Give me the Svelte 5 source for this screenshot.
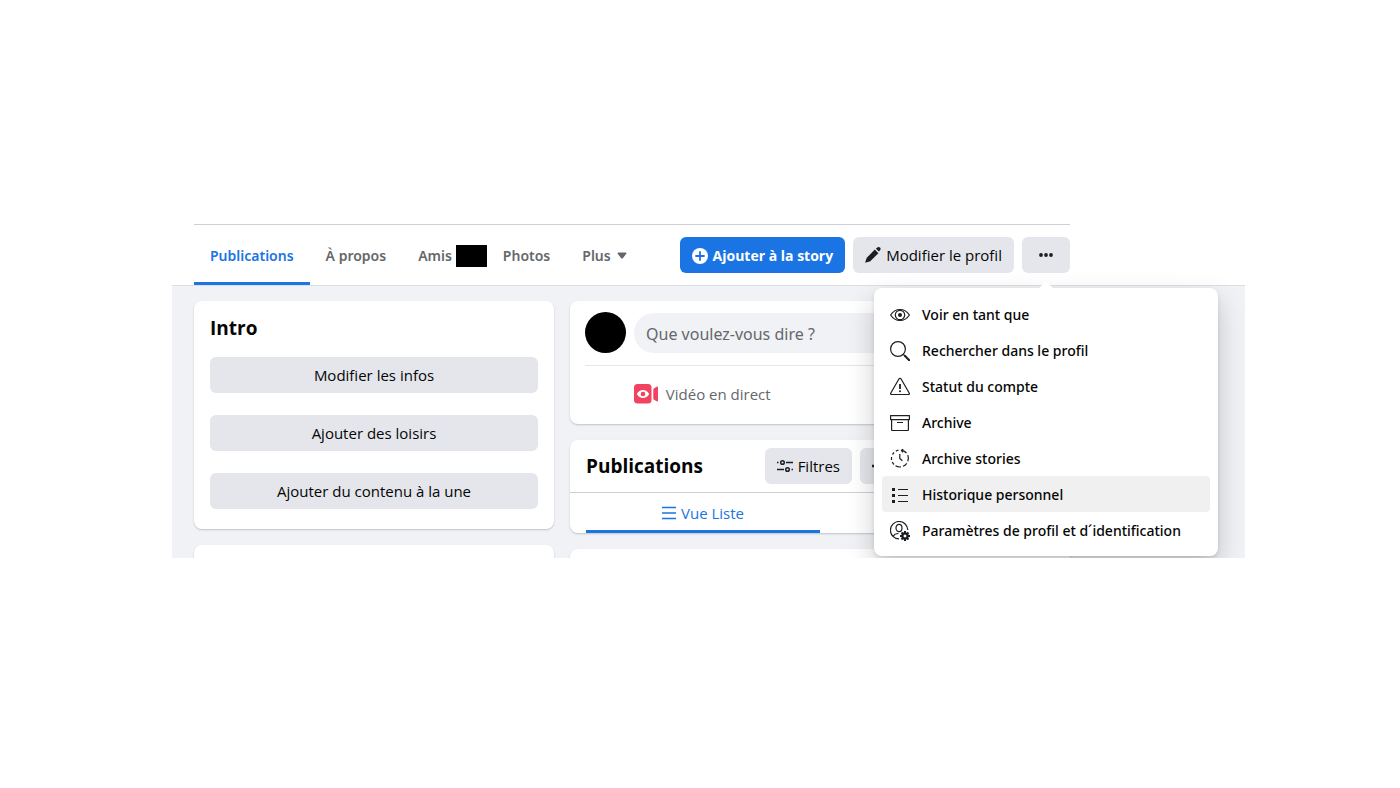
<script>
    let tab = 'Publications';
    let post = '';

    const menu = [
        { icon: 'eye', label: 'Voir en tant que' },
        { icon: 'search', label: 'Rechercher dans le profil' },
        { icon: 'warning', label: 'Statut du compte' },
        { icon: 'archive', label: 'Archive' },
        { icon: 'stories', label: 'Archive stories' },
        { icon: 'list', label: 'Historique personnel', active: true },
        { icon: 'settings', label: 'Paramètres de profil et d´identification' }
    ];

    const introActions = ['Modifier les infos', 'Ajouter des loisirs', 'Ajouter du contenu à la une'];
</script>

<main class="profile">
    <header class="topbar">
        <div class="topbar-inner">
            <nav class="tabs">
                <button class="tab" class:selected={tab === 'Publications'} on:click={() => (tab = 'Publications')}>Publications</button>
                <button class="tab" class:selected={tab === 'À propos'} on:click={() => (tab = 'À propos')}>À propos</button>
                <button class="tab friends" class:selected={tab === 'Amis'} on:click={() => (tab = 'Amis')}>Amis<span class="count"></span></button>
                <button class="tab" class:selected={tab === 'Photos'} on:click={() => (tab = 'Photos')}>Photos</button>
                <button class="tab more">
                    Plus
                    <svg width="10" height="8" viewBox="0 0 10 8"><path d="M1.4.5h7.2c.8 0 1.1.7.7 1.300L6 5.900c-.5.7-1.500.7-2 0L.7 1.800C.3 1.200.6.5 1.400.5Z" fill="#65676b" /></svg>
                </button>
            </nav>

            <div class="actions">
                <button class="btn primary">
                    <svg width="16" height="16" viewBox="0 0 16 16">
                        <circle cx="8" cy="8" r="8" fill="#fff" />
                        <path d="M8 4v8M4 8h8" stroke="#1b74e4" stroke-width="1.8" stroke-linecap="round" />
                    </svg>
                    Ajouter à la story
                </button>
                <button class="btn">
                    <svg width="16" height="16" viewBox="0 0 16 16" fill="#1c1e21">
                        <path d="M9.800 2.600 13.400 6.200 5.500 13.900c-.3.300-.6.500-1 .6L1 15.600c-.5.200-.9-.2-.7-.7l1.200-3.400c.1-.3.300-.7.500-.9Z" />
                        <path d="M10.900 1.700 12 .7c.9-.9 2.200-.8 3-.1s.8 2-.1 2.900l-1 1.100Z" />
                    </svg>
                    Modifier le profil
                </button>

                <div class="options">
                    <button class="btn dots" aria-label="Options du profil" aria-expanded="true">
                        <svg width="16" height="16" viewBox="0 0 16 16" fill="#1c1e21">
                            <circle cx="3" cy="8" r="1.900" /><circle cx="8" cy="8" r="1.900" /><circle cx="13" cy="8" r="1.900" />
                        </svg>
                    </button>

                    <div class="menu" role="menu">
                        <svg class="arrow" width="18" height="8" viewBox="0 0 18 8"><path d="M0 8C4 7 6 1 9 1s5 6 9 7Z" fill="#fff" /></svg>
                        {#each menu as item}
                            <button class="menu-item" class:active={item.active} role="menuitem">
                                <svg width="20" height="20" viewBox="0 0 20 20" fill="none" stroke="#1c1e21" stroke-width="1.2" stroke-linejoin="round">
                                    {#if item.icon === 'eye'}
                                        <path d="M.6 10C3 6.300 6.300 4.500 10 4.500s7 1.800 9.400 5.500C17 13.700 13.700 15.500 10 15.500S3 13.700.6 10Z" />
                                        <circle cx="10" cy="10" r="4.700" />
                                        <circle cx="10" cy="10" r="2" fill="#1c1e21" stroke="none" />
                                    {:else if item.icon === 'search'}
                                        <circle cx="8" cy="8" r="7.400" />
                                        <path d="m13.300 13.300 1.800 1.800" />
                                        <path d="m14.800 14.800 4.400 4.400" stroke-width="2" stroke-linecap="round" />
                                    {:else if item.icon === 'warning'}
                                        <path d="M8.900 2c.5-.9 1.700-.9 2.200 0l8.100 14c.5.9 0 1.500-.9 1.500H1.700c-.9 0-1.400-.6-.9-1.500Z" />
                                        <path d="M10 7v5" stroke-width="1.800" />
                                        <circle cx="10" cy="14.300" r="1" fill="#1c1e21" stroke="none" />
                                    {:else if item.icon === 'archive'}
                                        <path d="M.6 2.600h18.800v4H.6ZM1.600 6.600h16.800V17c0 .3-.2.5-.5.5H2.100c-.3 0-.5-.2-.5-.5ZM7 9.500h6" />
                                    {:else if item.icon === 'stories'}
                                        <path d="M12 1.300A8.500 8.500 0 0 1 16.500 4M17.800 6A8.500 8.500 0 0 1 17.800 12.300M16.700 14.300A8.500 8.500 0 0 1 13 17.300M11 17.900A8.500 8.500 0 0 1 5.500 16.800M4 15.500A8.500 8.500 0 0 1 2.300 13M1.600 11A8.500 8.500 0 0 1 1.600 8M2.500 5.500A8.500 8.500 0 0 1 4 3.500M5.800 2.200A8.500 8.500 0 0 1 8.500 1.200" />
                                        <path d="M13.300 0 11.500 1.300l1.400 2" />
                                        <path d="M9.800 5v4.500l2.600 2.200" />
                                    {:else if item.icon === 'list'}
                                        <path d="M8 4.500h10M8 10.500h10M8 16.500h10" />
                                        <path d="M2 3h3v3H2ZM2 9h3v3H2ZM2 15h3v3H2Z" fill="#1c1e21" stroke="none" />
                                    {:else}
                                        <path d="M9 17.900A8.700 8.700 0 1 1 17.800 9M3.200 15.300c1-1.900 3-2.800 5.300-2.800" />
                                        <ellipse cx="9" cy="7" rx="3" ry="3.600" />
                                        <circle cx="15" cy="15" r="2.600" stroke-width="2.200" />
                                        <path d="M15 10v2M15 18v2M10 15h2M18 15h2M11.500 11.500l1.400 1.400M17.100 17.100l1.400 1.400M11.500 18.500l1.400-1.400M17.100 12.900l1.400-1.400" stroke-width="2" />
                                    {/if}
                                </svg>
                                {item.label}
                            </button>
                        {/each}
                    </div>
                </div>
            </div>
        </div>
    </header>

    <div class="content">
        <div class="column">
            <section class="card intro">
                <h2>Intro</h2>
                {#each introActions as action}
                    <button class="btn">{action}</button>
                {/each}
            </section>
            <section class="card next left"></section>
        </div>

        <div class="column">
            <section class="card composer">
                <div class="composer-row">
                    <div class="avatar"></div>
                    <input type="text" aria-label="Que voulez-vous dire ?" placeholder="Que voulez-vous dire ?" bind:value={post} />
                </div>
                <div class="halves">
                    <button class="live">
                        <svg width="24" height="20" viewBox="0 0 24 20">
                            <rect y="0" width="17.500" height="19.500" rx="3.500" fill="#f3425f" />
                            <path d="M24 3.500v13c0 .8-.6 1.100-1.300.8l-2.200-1.200c-.7-.4-1.200-1-1.200-1.900V6c0-.9.5-1.500 1.200-1.900l2.200-1.300c.7-.4 1.300-.1 1.300.7Z" fill="#f3425f" />
                            <path d="M2.800 10C4.300 7.300 6.500 6 9 6s4.700 1.300 6.200 4c-1.500 2.700-3.700 4-6.200 4s-4.700-1.300-6.200-4Z" fill="#fff" />
                            <circle cx="9" cy="10" r="2.300" fill="#f3425f" />
                        </svg>
                        Vidéo en direct
                    </button>
                </div>
            </section>

            <section class="card posts">
                <div class="posts-head">
                    <h2>Publications</h2>
                    <button class="btn filters">
                        <svg width="16" height="16" viewBox="0 0 16 16" fill="none" stroke="#1c1e21" stroke-width="1.500">
                            <circle cx="5.500" cy="4.500" r="1.800" /><circle cx="10.500" cy="11.500" r="1.800" />
                            <path d="M0 4.500h1.500M9 4.500h7M0 11.500h7M14.500 11.500H16" />
                        </svg>
                        Filtres
                    </button>
                    <button class="btn manage" aria-label="Gérer les publications">
                        <svg width="16" height="16" viewBox="0 0 16 16" fill="none" stroke="#1c1e21">
                            <circle cx="8" cy="8" r="4" stroke-width="2.500" />
                            <path d="M8 0v3M8 13v3M0 8h3M13 8h3M2.800 2.800l2 2M11.200 11.200l2 2M2.800 13.200l2-2M11.200 4.800l2-2" stroke-width="2.500" />
                        </svg>
                    </button>
                </div>
                <div class="halves">
                    <button class="view">
                        <svg width="14" height="14" viewBox="0 0 14 14"><path d="M0 1.500h14M0 7h14M0 12.500h14" stroke="#1b74e4" stroke-width="1.500" /></svg>
                        Vue Liste
                    </button>
                </div>
            </section>
            <section class="card next"></section>
        </div>
    </div>
</main>

<style>
    :global(body) {
        margin: 0;
        background: #fff;
        color: #050505;
        font-family: "Open Sans", "Noto Sans", sans-serif;
        font-size: 15px;
    }

    .profile {
        margin: 224px 155px 0 172px;
        overflow: hidden;
        background: #f0f2f5;
    }

    button {
        border: none;
        background: none;
        padding: 0;
        color: inherit;
        font: inherit;
        font-size: 15px;
        line-height: 20px;
        white-space: nowrap;
        cursor: pointer;
    }

    svg {
        flex: none;
    }

    h2 {
        margin: 0;
        font-size: 19px;
        font-weight: 700;
        line-height: 22px;
    }

    .topbar {
        padding: 0 175px 0 22px;
        background: #fff;
        border-bottom: 1px solid #dcdee1;
    }

    .topbar-inner {
        display: flex;
        justify-content: space-between;
        border-top: 1px solid #ced0d4;
        height: 60px;
    }

    .tabs {
        display: flex;
    }

    .tab {
        display: flex;
        align-items: center;
        padding: 5px 16px 0;
        border-bottom: 3px solid transparent;
        color: #65676b;
        font-family: "Noto Sans", sans-serif;
        font-size: 14px;
        font-weight: 600;
    }

    .tab.selected {
        color: #1b74e4;
        border-bottom-color: #1b74e4;
        border-radius: 2px 2px 0 0;
    }

    .friends {
        gap: 4px;
        padding-right: 0;
    }

    .count {
        width: 31px;
        height: 22px;
        background: #000;
    }

    .more {
        gap: 6px;
    }

    .actions {
        display: flex;
        align-items: center;
        gap: 8px;
    }

    .btn {
        display: flex;
        align-items: center;
        justify-content: center;
        gap: 5px;
        height: 36px;
        padding: 0 12px;
        border-radius: 6px;
        background: #e4e6eb;
    }

    .primary {
        padding-top: 2px;
        background: #1b74e4;
        color: #fff;
        font-size: 14px;
        font-weight: 700;
    }

    .options {
        position: relative;
    }

    .dots {
        width: 48px;
    }

    .menu {
        position: absolute;
        z-index: 1;
        top: 51px;
        right: -148px;
        width: 344px;
        box-sizing: border-box;
        padding: 8px;
        border-radius: 8px;
        background: #fff;
        box-shadow: 0 12px 28px rgba(0, 0, 0, 0.2), 0 2px 4px rgba(0, 0, 0, 0.1);
    }

    .arrow {
        position: absolute;
        top: -7px;
        right: 163px;
    }

    .menu-item {
        display: flex;
        align-items: center;
        gap: 12px;
        width: 100%;
        height: 36px;
        padding: 1px 8px 0;
        border-radius: 4px;
        font-family: "Noto Sans", sans-serif;
        font-size: 14px;
        font-weight: 500;
    }

    .menu-item.active {
        background: #f0f0f0;
    }

    .content {
        display: grid;
        grid-template-columns: 360fr 500fr;
        gap: 16px;
        padding: 15px 175px 0 22px;
    }

    .column {
        display: flex;
        flex-direction: column;
        gap: 16px;
    }

    .card {
        border-radius: 8px;
        background: #fff;
        box-shadow: 0 1px 2px rgba(0, 0, 0, 0.2);
    }

    .intro {
        display: flex;
        flex-direction: column;
        gap: 22px;
        padding: 16px 16px 20px;
    }

    .intro h2 {
        margin-bottom: -4px;
    }

    .next {
        height: 9px;
        border-radius: 8px 8px 0 0;
    }

    .next.left {
        height: 13px;
    }

    .composer {
        padding: 11px 16px 10px 15px;
    }

    .composer-row {
        display: flex;
        align-items: center;
        gap: 8px;
        padding-bottom: 12px;
        border-bottom: 1px solid #e4e6eb;
    }

    .avatar {
        flex: none;
        width: 41px;
        height: 41px;
        border-radius: 50%;
        background: #000;
    }

    input {
        flex: 1;
        min-width: 0;
        height: 40px;
        box-sizing: border-box;
        padding: 2px 12px 0;
        border: none;
        border-radius: 20px;
        background: #f0f2f5;
        font-family: "Noto Sans", sans-serif;
        font-size: 16px;
    }

    input::placeholder {
        color: #65676b;
        opacity: 1;
    }

    .halves {
        display: grid;
        grid-template-columns: 1fr 1fr;
    }

    .live {
        display: flex;
        align-items: center;
        justify-content: center;
        gap: 8px;
        height: 40px;
        margin-top: 8px;
        color: #65676b;
    }

    .posts-head {
        display: flex;
        align-items: center;
        gap: 8px;
        padding: 8px 16px;
        border-bottom: 1px solid #ced0d4;
    }

    .posts-head h2 {
        flex: 1;
    }

    .manage {
        justify-content: flex-start;
        width: 194px;
    }

    .posts .halves {
        padding: 0 16px;
    }

    .view {
        display: flex;
        align-items: center;
        justify-content: center;
        gap: 5px;
        height: 40px;
        padding-top: 2px;
        border-bottom: 3px solid #1b74e4;
        border-radius: 2px 2px 0 0;
        color: #1b74e4;
    }
</style>
